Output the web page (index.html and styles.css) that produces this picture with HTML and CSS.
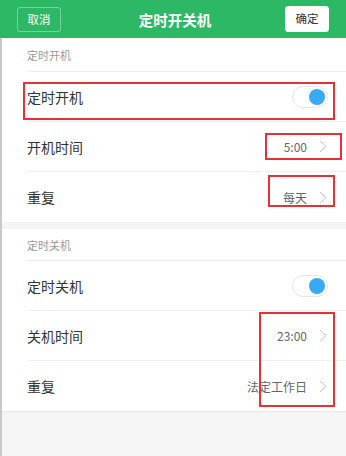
FILE: index.html
```html
<!DOCTYPE html>
<html>
<head>
<meta charset="utf-8">
<link rel="stylesheet" href="styles.css">
</head>
<body>
<div class="app">
  <header class="bar">
    <button class="btn btn-cancel">取消</button>
    <div class="title">定时开关机</div>
    <button class="btn btn-ok">确定</button>
  </header>
  <main class="content">
    <section class="group">
      <div class="group-title">定时开机</div>
      <div class="row"><span class="label">定时开机</span><span class="switch"><span class="knob"></span></span></div>
      <div class="row"><span class="label">开机时间</span><span class="value">5:00<svg class="chev" width="8" height="13" viewBox="0 0 8 13"><polyline points="1,1 7,6.5 1,12" fill="none" stroke="#c4c4c4" stroke-width="1"/></svg></span></div>
      <div class="row last"><span class="label">重复</span><span class="value">每天<svg class="chev" width="8" height="13" viewBox="0 0 8 13"><polyline points="1,1 7,6.5 1,12" fill="none" stroke="#c4c4c4" stroke-width="1"/></svg></span></div>
    </section>
    <div class="spacer"></div>
    <section class="group">
      <div class="group-title two">定时关机</div>
      <div class="row"><span class="label">定时关机</span><span class="switch"><span class="knob"></span></span></div>
      <div class="row"><span class="label">关机时间</span><span class="value">23:00<svg class="chev" width="8" height="13" viewBox="0 0 8 13"><polyline points="1,1 7,6.5 1,12" fill="none" stroke="#c4c4c4" stroke-width="1"/></svg></span></div>
      <div class="row last"><span class="label">重复</span><span class="value">法定工作日<svg class="chev" width="8" height="13" viewBox="0 0 8 13"><polyline points="1,1 7,6.5 1,12" fill="none" stroke="#c4c4c4" stroke-width="1"/></svg></span></div>
    </section>
    <div class="footer"></div>
  </main>
  <div class="mark m1"></div>
  <div class="mark m2"></div>
  <div class="mark m3"></div>
  <div class="mark m4"></div>
</div>
</body>
</html>
```

FILE: styles.css
```css
* { box-sizing: border-box; }
html, body { margin: 0; padding: 0; }
body {
  width: 346px;
  height: 456px;
  overflow: hidden;
  font-family: "Noto Sans CJK SC", "Liberation Sans", sans-serif;
  background: #f5f5f5;
}
.app { position: relative; width: 346px; height: 456px; }
.bar {
  height: 38px;
  background: #2db865;
  display: flex;
  align-items: center;
  justify-content: space-between;
  padding: 0 17px;
}
.title {
  color: #fff;
  font-size: 14.5px;
  font-weight: bold;
  margin-left: 4px;
}
.btn {
  font-family: inherit;
  font-size: 11.5px;
  width: 44px;
  height: 25px;
  border-radius: 3px;
  padding: 0;
  line-height: 23px;
}
.btn-cancel {
  background: transparent;
  color: #fff;
  border: 1px solid rgba(255,255,255,0.35);
}
.btn-ok {
  background: #fff;
  color: #333;
  border: 1px solid #fff;
  height: 26px;
  margin-top: -1px;
}
.content {
  border-left: 2px solid #c9c9c9;
  height: 418px;
  display: flex;
  flex-direction: column;
}
.group { background: #fff; }
.group-title {
  height: 34px;
  margin-left: 25px;
  border-bottom: 1px solid #eeeeee;
  font-size: 11px;
  color: #999;
  display: flex;
  align-items: center;
}
.group-title.two { height: 32px; }
.row {
  height: 50px;
  margin-left: 25px;
  padding-right: 19px;
  border-bottom: 1px solid #f0f0f0;
  display: flex;
  align-items: center;
  justify-content: space-between;
}
.row.last { border-bottom: none; }
.label { font-size: 14px; color: #333; }
.value {
  font-size: 12px;
  color: #666;
  display: flex;
  align-items: center;
}
.chev { margin-left: 12px; }
.switch {
  width: 36px;
  height: 22px;
  border-radius: 11px;
  border: 1px solid #e6e6e6;
  background: #fff;
  display: flex;
  align-items: center;
  justify-content: flex-end;
  padding-right: 2px;
  margin-right: -1px;
}
.knob {
  width: 16px;
  height: 16px;
  border-radius: 50%;
  background: #3aa9f4;
}
.spacer { height: 7px; background: #f5f5f5; }
.footer {
  flex: 1;
  background: #f5f5f5;
  border-top: 1px solid #e8e8e8;
}
.mark {
  position: absolute;
  border: 2.5px solid #e3333a;
}
.m1 { left: 23px; top: 82px; width: 312px; height: 38px; }
.m2 { left: 265px; top: 133px; width: 77px; height: 27px; }
.m3 { left: 268px; top: 175px; width: 67px; height: 32px; }
.m4 { left: 259px; top: 312px; width: 76px; height: 95px; }
```
